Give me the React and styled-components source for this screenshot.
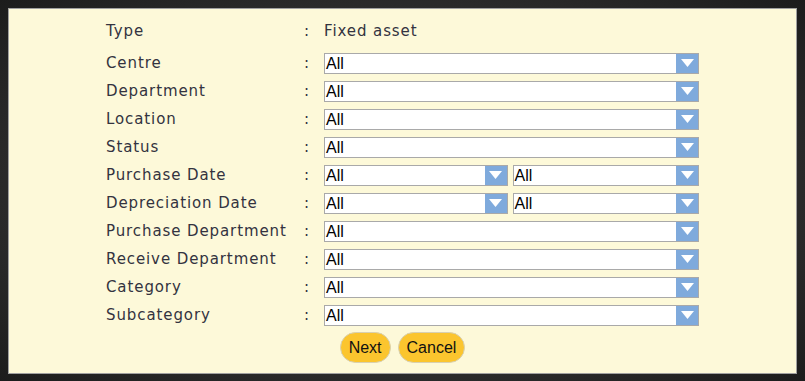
import React from 'react';
import styled, { createGlobalStyle } from 'styled-components';

const GlobalStyle = createGlobalStyle`
  html, body {
    margin: 0;
    padding: 0;
    background: #262626;
  }
  body {
    width: 805px;
    height: 381px;
    overflow: hidden;
  }
`;

const Frame = styled.div`
  box-sizing: border-box;
  width: 805px;
  height: 381px;
  padding: 8px;
  background: radial-gradient(ellipse at center, #3a3a3a 0%, #2a2a2a 70%, #1c1c1c 100%);
`;

const Panel = styled.div`
  box-sizing: border-box;
  height: 366px;
  width: 789px;
  background: #fdf9d9;
  border: 1px solid #a0a0a0;
  padding: 12px 0 0 97px;
  font-family: "DejaVu Sans", Verdana, sans-serif;
  font-size: 15px;
  letter-spacing: 0.9px;
  color: #333340;
`;

const Form = styled.div`
  display: grid;
  grid-template-columns: 198px 20px 375px;
  grid-auto-rows: 28px;
  align-items: center;
`;

const Label = styled.div`
  white-space: nowrap;
  margin-bottom: ${p => (p.$first ? '8px' : '0')};
`;

const Colon = styled.div`
  margin-bottom: ${p => (p.$first ? '8px' : '0')};
`;

const Value = styled.div`
  margin-bottom: ${p => (p.$first ? '8px' : '0')};
`;

const Pair = styled.div`
  display: flex;
  gap: 5px;
`;

const SelectBox = styled.div`
  box-sizing: border-box;
  display: flex;
  align-items: stretch;
  width: ${p => p.$width}px;
  height: 21px;
  background: #fff;
  border: 1px solid #a9a9a9;
  font-family: "Liberation Sans", Arial, sans-serif;
  font-size: 16px;
  letter-spacing: 0;
  color: #000;
`;

const SelectText = styled.span`
  flex: 1;
  padding-left: 1px;
  line-height: 19px;
`;

const Arrow = styled.span`
  width: 22px;
  background: #7faadc;
  display: flex;
  align-items: center;
  justify-content: center;
`;

const Buttons = styled.div`
  display: flex;
  justify-content: center;
  gap: 7px;
  margin: 3px 0 0 -97px;
`;

const Button = styled.button`
  height: 31px;
  padding: 0 8px;
  border: 1px solid #d8d0b0;
  border-radius: 16px;
  background: #fbc52e;
  font-family: "Liberation Sans", Arial, sans-serif;
  font-size: 16px;
  color: #111;
`;

const Select = ({ width = 375 }) => (
  <SelectBox $width={width}>
    <SelectText>All</SelectText>
    <Arrow>
      <svg width="13" height="8" viewBox="0 0 13 8">
        <polygon points="0,0 13,0 6.5,8" fill="#fff" />
      </svg>
    </Arrow>
  </SelectBox>
);

const single = ['Centre', 'Department', 'Location', 'Status'];
const paired = ['Purchase Date', 'Depreciation Date'];
const rest = ['Purchase Department', 'Receive Department', 'Category', 'Subcategory'];

export default function App() {
  return (
    <>
      <GlobalStyle />
      <Frame>
        <Panel>
          <Form>
            <Label $first>Type</Label>
            <Colon $first>:</Colon>
            <Value $first>Fixed asset</Value>
            {single.map(l => (
              <React.Fragment key={l}>
                <Label>{l}</Label>
                <Colon>:</Colon>
                <Select />
              </React.Fragment>
            ))}
            {paired.map(l => (
              <React.Fragment key={l}>
                <Label>{l}</Label>
                <Colon>:</Colon>
                <Pair>
                  <Select width={184} />
                  <Select width={187} />
                </Pair>
              </React.Fragment>
            ))}
            {rest.map(l => (
              <React.Fragment key={l}>
                <Label>{l}</Label>
                <Colon>:</Colon>
                <Select />
              </React.Fragment>
            ))}
          </Form>
          <Buttons>
            <Button>Next</Button>
            <Button>Cancel</Button>
          </Buttons>
        </Panel>
      </Frame>
    </>
  );
}
